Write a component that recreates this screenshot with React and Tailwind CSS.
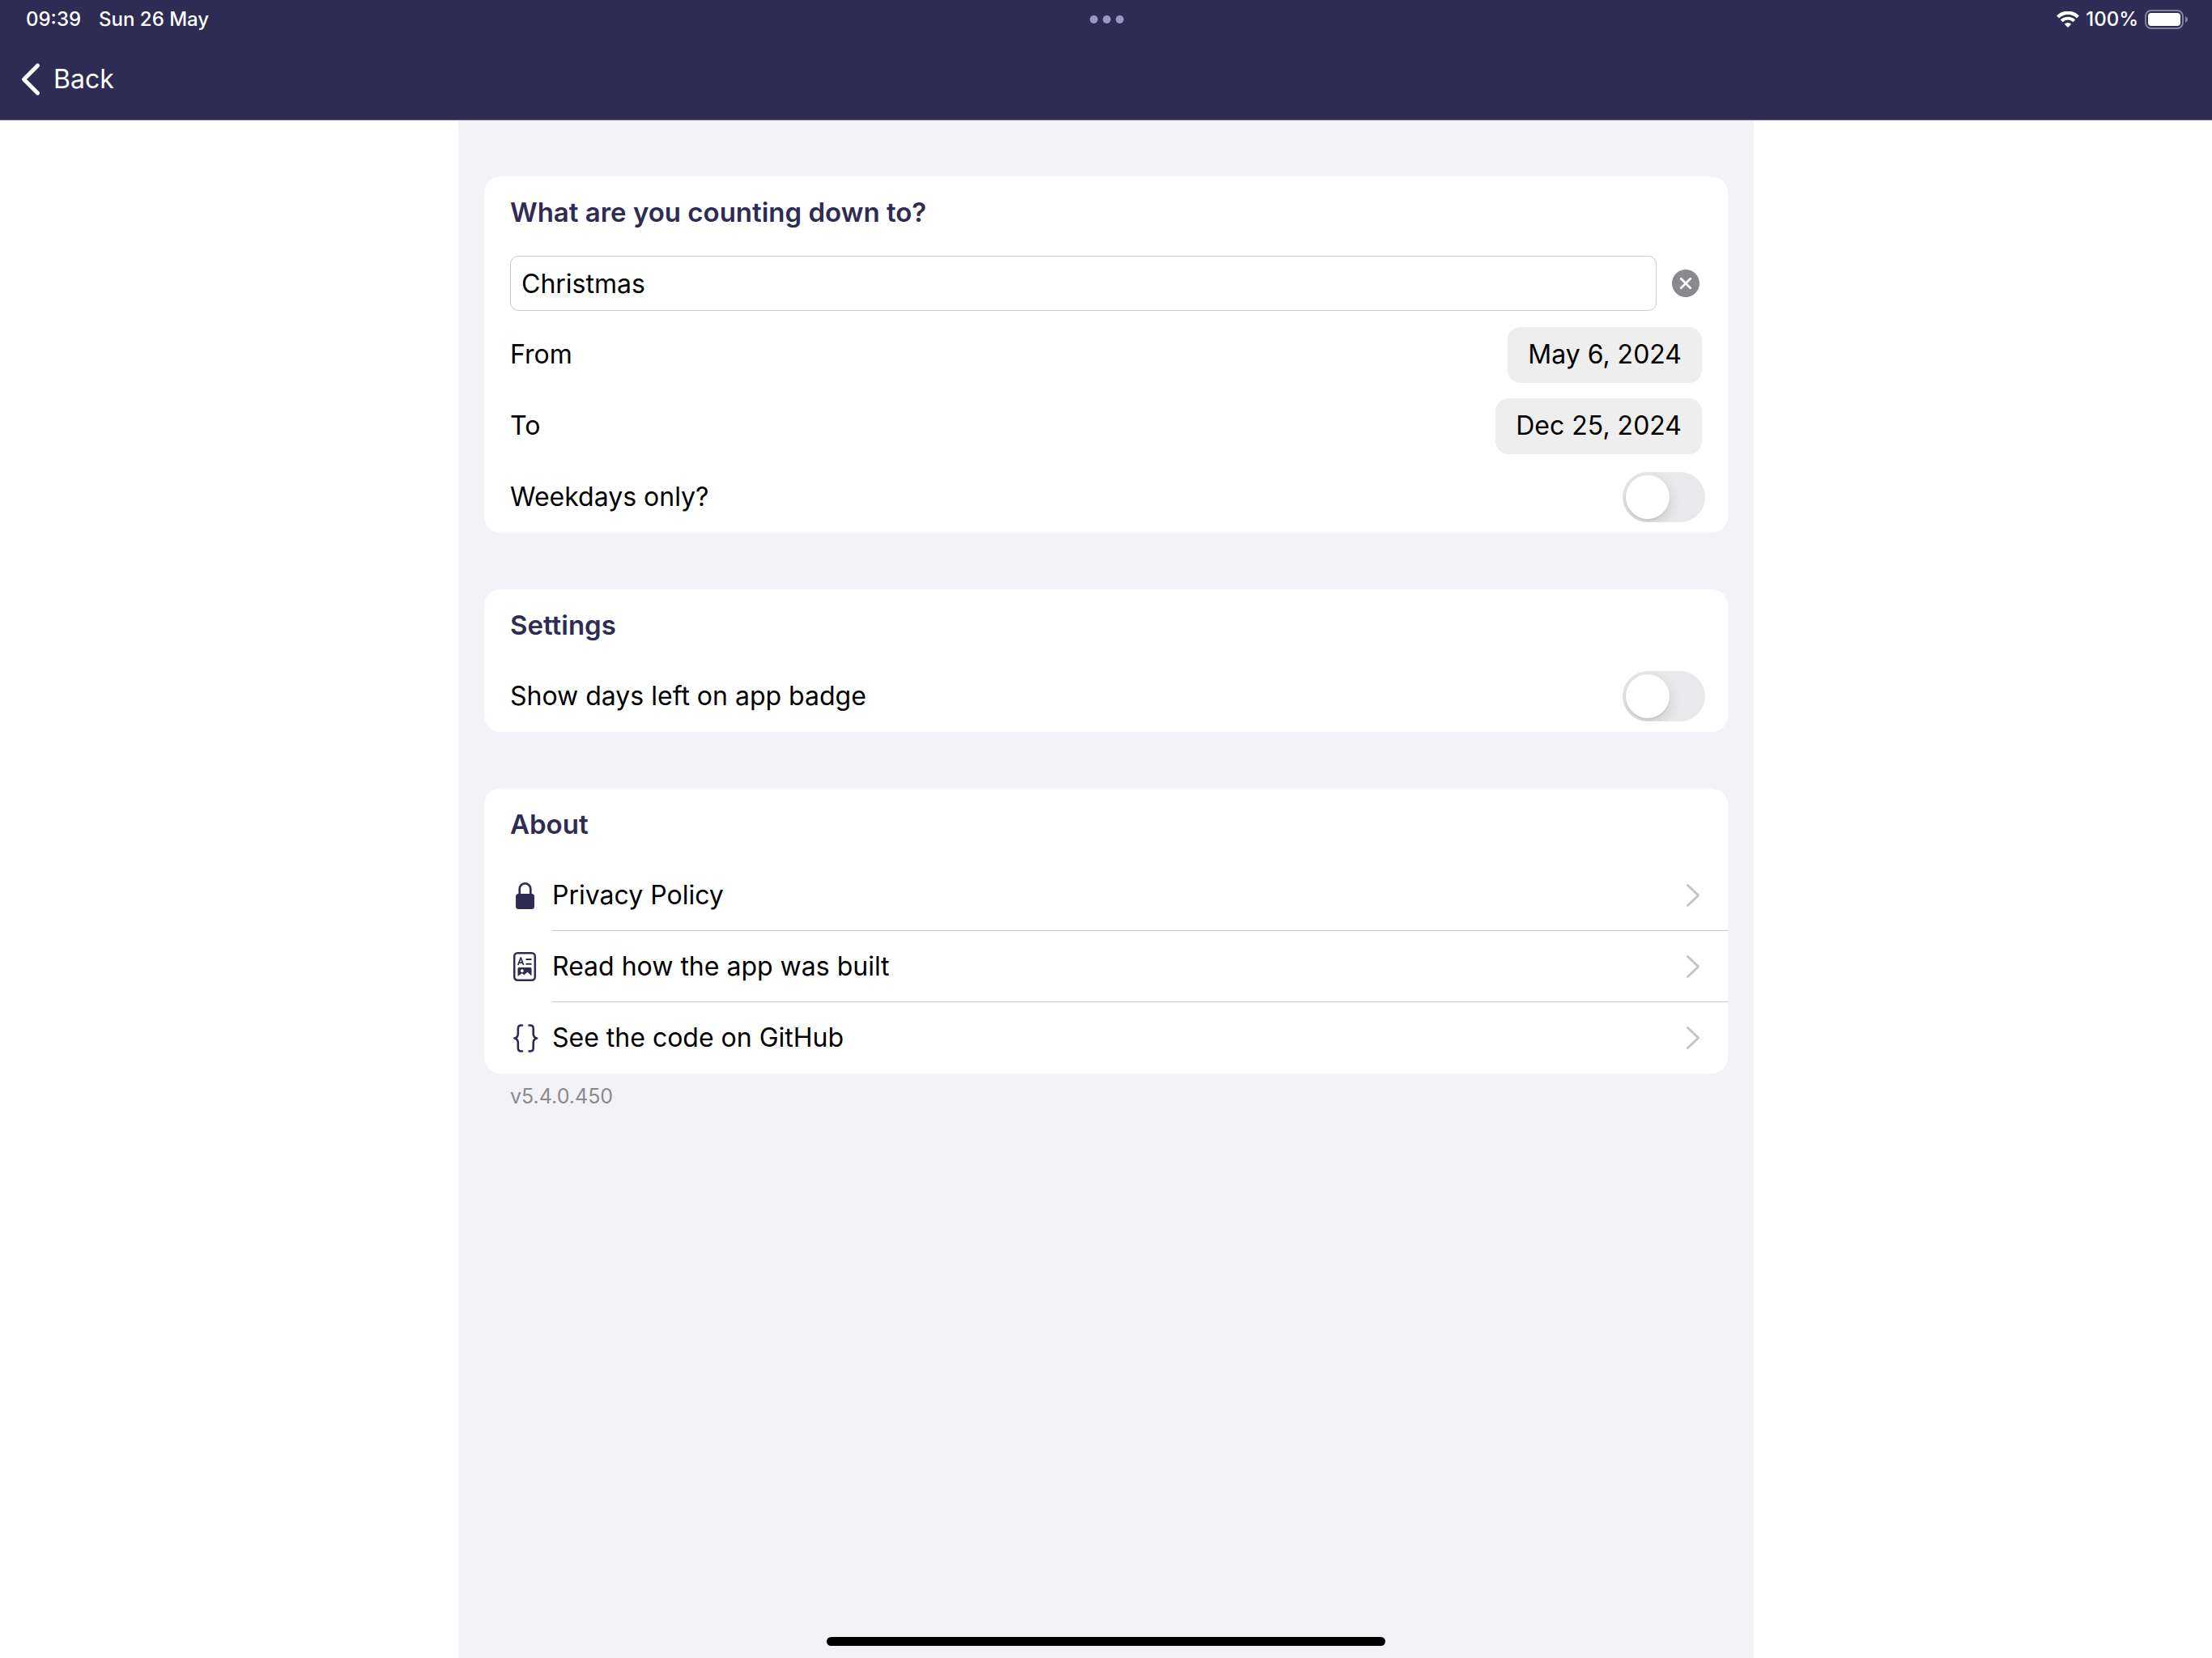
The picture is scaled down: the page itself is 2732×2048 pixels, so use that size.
import { useState } from "react";

function StatusBar() {
  return (
    <div className="grid h-12 grid-cols-3 items-center pl-8 pr-[30px] text-[24px] leading-8 font-medium">
      <div className="flex gap-[22px]">
        <span>09:39</span>
        <span>Sun 26 May</span>
      </div>
      <div className="flex justify-center gap-1.5">
        <span className="size-2.5 rounded-full bg-[#9b98c3]" />
        <span className="size-2.5 rounded-full bg-[#9b98c3]" />
        <span className="size-2.5 rounded-full bg-[#9b98c3]" />
      </div>
      <div className="flex items-center justify-end gap-2">
        <svg width="28" height="20" viewBox="0 0 28 20" fill="none" aria-label="Wi-Fi">
          <path d="M1.6 6.9a17.6 17.6 0 0 1 24.8 0" stroke="white" strokeWidth="4.2" />
          <path d="M6.2 11.8a11.1 11.1 0 0 1 15.6 0" stroke="white" strokeWidth="3.9" />
          <path d="M14 20l-4.2-4.3a6 6 0 0 1 8.4 0z" fill="white" />
        </svg>
        <span>100%</span>
        <svg width="53" height="24" viewBox="0 0 53 24" fill="none" aria-label="Battery full">
          <rect x="1" y="1" width="46" height="22" rx="7" stroke="#858399" strokeWidth="2" />
          <rect x="4" y="4" width="40" height="16" rx="4" fill="white" />
          <path d="M50 8c4 1.5 4 6.5 0 8z" fill="#858399" />
        </svg>
      </div>
    </div>
  );
}

function Card({ title, children }) {
  return (
    <section className="rounded-[20px] bg-white">
      <h2 className="flex h-[88px] items-center px-8 text-[33px] font-semibold text-[#2e2c54]">{title}</h2>
      {children}
    </section>
  );
}

function DateRow({ label, value }) {
  return (
    <div className="flex h-[88px] items-center justify-between px-8">
      <span>{label}</span>
      <button type="button" aria-label={label + " " + value} className="h-[69px] rounded-2xl bg-[#eeeeef] px-[25px]">
        {value}
      </button>
    </div>
  );
}

function ToggleRow({ label }) {
  const [on, setOn] = useState(false);
  return (
    <label className="flex h-[88px] items-center justify-between pr-7 pl-8">
      <span>{label}</span>
      <input
        type="checkbox"
        role="switch"
        checked={on}
        onChange={() => setOn(!on)}
        className="h-[62px] w-[102px] appearance-none overflow-hidden rounded-full bg-[#e9e9eb] p-1 before:block before:size-[54px] before:rounded-full before:bg-white before:shadow-[0_6px_16px_rgba(0,0,0,0.14),0_2px_2px_rgba(0,0,0,0.05)] checked:bg-[#34c759] checked:before:ml-10"
      />
    </label>
  );
}

function LockIcon() {
  return (
    <svg width="36" height="40" viewBox="0 0 36 40" fill="none">
      <path d="M11.700 19v-6.900a6.800 6.800 0 0 1 13.600 0v6.900" stroke="#2e2c54" strokeWidth="2.600" />
      <rect x="7" y="18" width="23" height="19" rx="3.500" fill="#2e2c54" />
    </svg>
  );
}

function DocIcon() {
  return (
    <svg width="36" height="40" viewBox="0 0 36 40" fill="none">
      <rect x="5.200" y="3.200" width="25.600" height="33.600" rx="4" stroke="#2e2c54" strokeWidth="2.500" />
      <path d="M9.800 18l3.400-9 3.400 9M11 15.200h4.400" stroke="#2e2c54" strokeWidth="1.800" strokeLinejoin="round" />
      <path d="M19.500 11h7M19.500 16.700h7" stroke="#2e2c54" strokeWidth="2" />
      <path fillRule="evenodd" d="M9.500 22.500q0-1.500 1.500-1.500h14q1.500 0 1.500 1.500v9l-5-4.800-4.200 3.600-2.600-2-5.200 3.700zM14.800 23.300a1.900 1.900 0 1 0 .01 0z" fill="#2e2c54" />
    </svg>
  );
}

function BracesIcon() {
  return (
    <svg width="36" height="40" viewBox="0 0 36 40" fill="none" stroke="#2e2c54" strokeWidth="2.600" strokeLinecap="round" strokeLinejoin="round">
      <path d="M15 4.500h-1.200q-4 0-4 4v6.500q0 4.500-4.400 5.500q4.400 1 4.400 5.500v6.500q0 4 4 4h1.200" />
      <path d="M23.500 4.500h1.200q4 0 4 4v6.500q0 4.500 4.400 5.500q-4.400 1-4.400 5.500v6.500q0 4-4 4h-1.200" />
    </svg>
  );
}

function LinkRow({ icon, label, last }) {
  return (
    <a href="#" className="flex h-[88px] items-center gap-4 pl-8">
      {icon}
      <span className={last ? "flex h-full flex-1 items-center justify-between pr-8" : "flex h-full flex-1 items-center justify-between border-b border-[#c6c6c8] pr-8"}>
        {label}
        <svg width="22" height="32" viewBox="0 0 22 32" fill="none">
          <path d="M4.500 3.500L17.500 16L4.500 28.500" stroke="#c4c4c6" strokeWidth="2.800" strokeLinecap="round" strokeLinejoin="round" />
        </svg>
      </span>
    </a>
  );
}

export default function App() {
  const [name, setName] = useState("Christmas");
  return (
    <div className="flex min-h-screen flex-col bg-white font-['Inter',sans-serif] text-[32px] leading-10 text-black">
      <header className="border-b border-[#a9a8b8] bg-[#2e2c54] text-white">
        <StatusBar />
        <nav className="flex h-[100px] items-center pl-6">
          <button type="button" className="flex items-center gap-3.5">
            <svg width="28" height="44" viewBox="0 0 28 44" fill="none">
              <path d="M22.500 5L5.500 22L22.500 39" stroke="white" strokeWidth="5" strokeLinecap="round" strokeLinejoin="round" />
            </svg>
            Back
          </button>
        </nav>
      </header>
      <main className="mx-auto flex w-full max-w-[1600px] flex-1 flex-col bg-[#f2f2f7] px-8 pt-[69px]">
        <div className="flex flex-col gap-[70px]">
          <Card title="What are you counting down to?">
            <div className="flex h-[88px] items-center gap-4 px-8">
              <input
                type="text"
                aria-label="What are you counting down to?"
                value={name}
                onChange={(e) => setName(e.target.value)}
                className="h-[68px] min-w-0 flex-1 rounded-[10px] border border-[#cdcdcd] bg-white px-[13px] outline-none"
              />
              <button type="button" aria-label="Clear text" onClick={() => setName("")}>
                <svg width="40" height="40" viewBox="0 0 40 40" fill="none">
                  <circle cx="20" cy="20" r="17" fill="#8a8a8e" />
                  <path d="M14.200 14.200l11.600 11.600M25.800 14.200l-11.600 11.600" stroke="white" strokeWidth="2.700" strokeLinecap="round" />
                </svg>
              </button>
            </div>
            <DateRow label="From" value="May 6, 2024" />
            <DateRow label="To" value="Dec 25, 2024" />
            <ToggleRow label="Weekdays only?" />
          </Card>
          <Card title="Settings">
            <ToggleRow label="Show days left on app badge" />
          </Card>
          <Card title="About">
            <LinkRow icon={<LockIcon />} label="Privacy Policy" />
            <LinkRow icon={<DocIcon />} label="Read how the app was built" />
            <LinkRow icon={<BracesIcon />} label="See the code on GitHub" last />
          </Card>
        </div>
        <p className="px-8 pt-3 text-[25px] leading-8 text-[#8a8a8e]">v5.4.0.450</p>
        <div className="mx-auto mt-auto mb-[15px] h-[11px] w-[690px] rounded-full bg-black" />
      </main>
    </div>
  );
}
